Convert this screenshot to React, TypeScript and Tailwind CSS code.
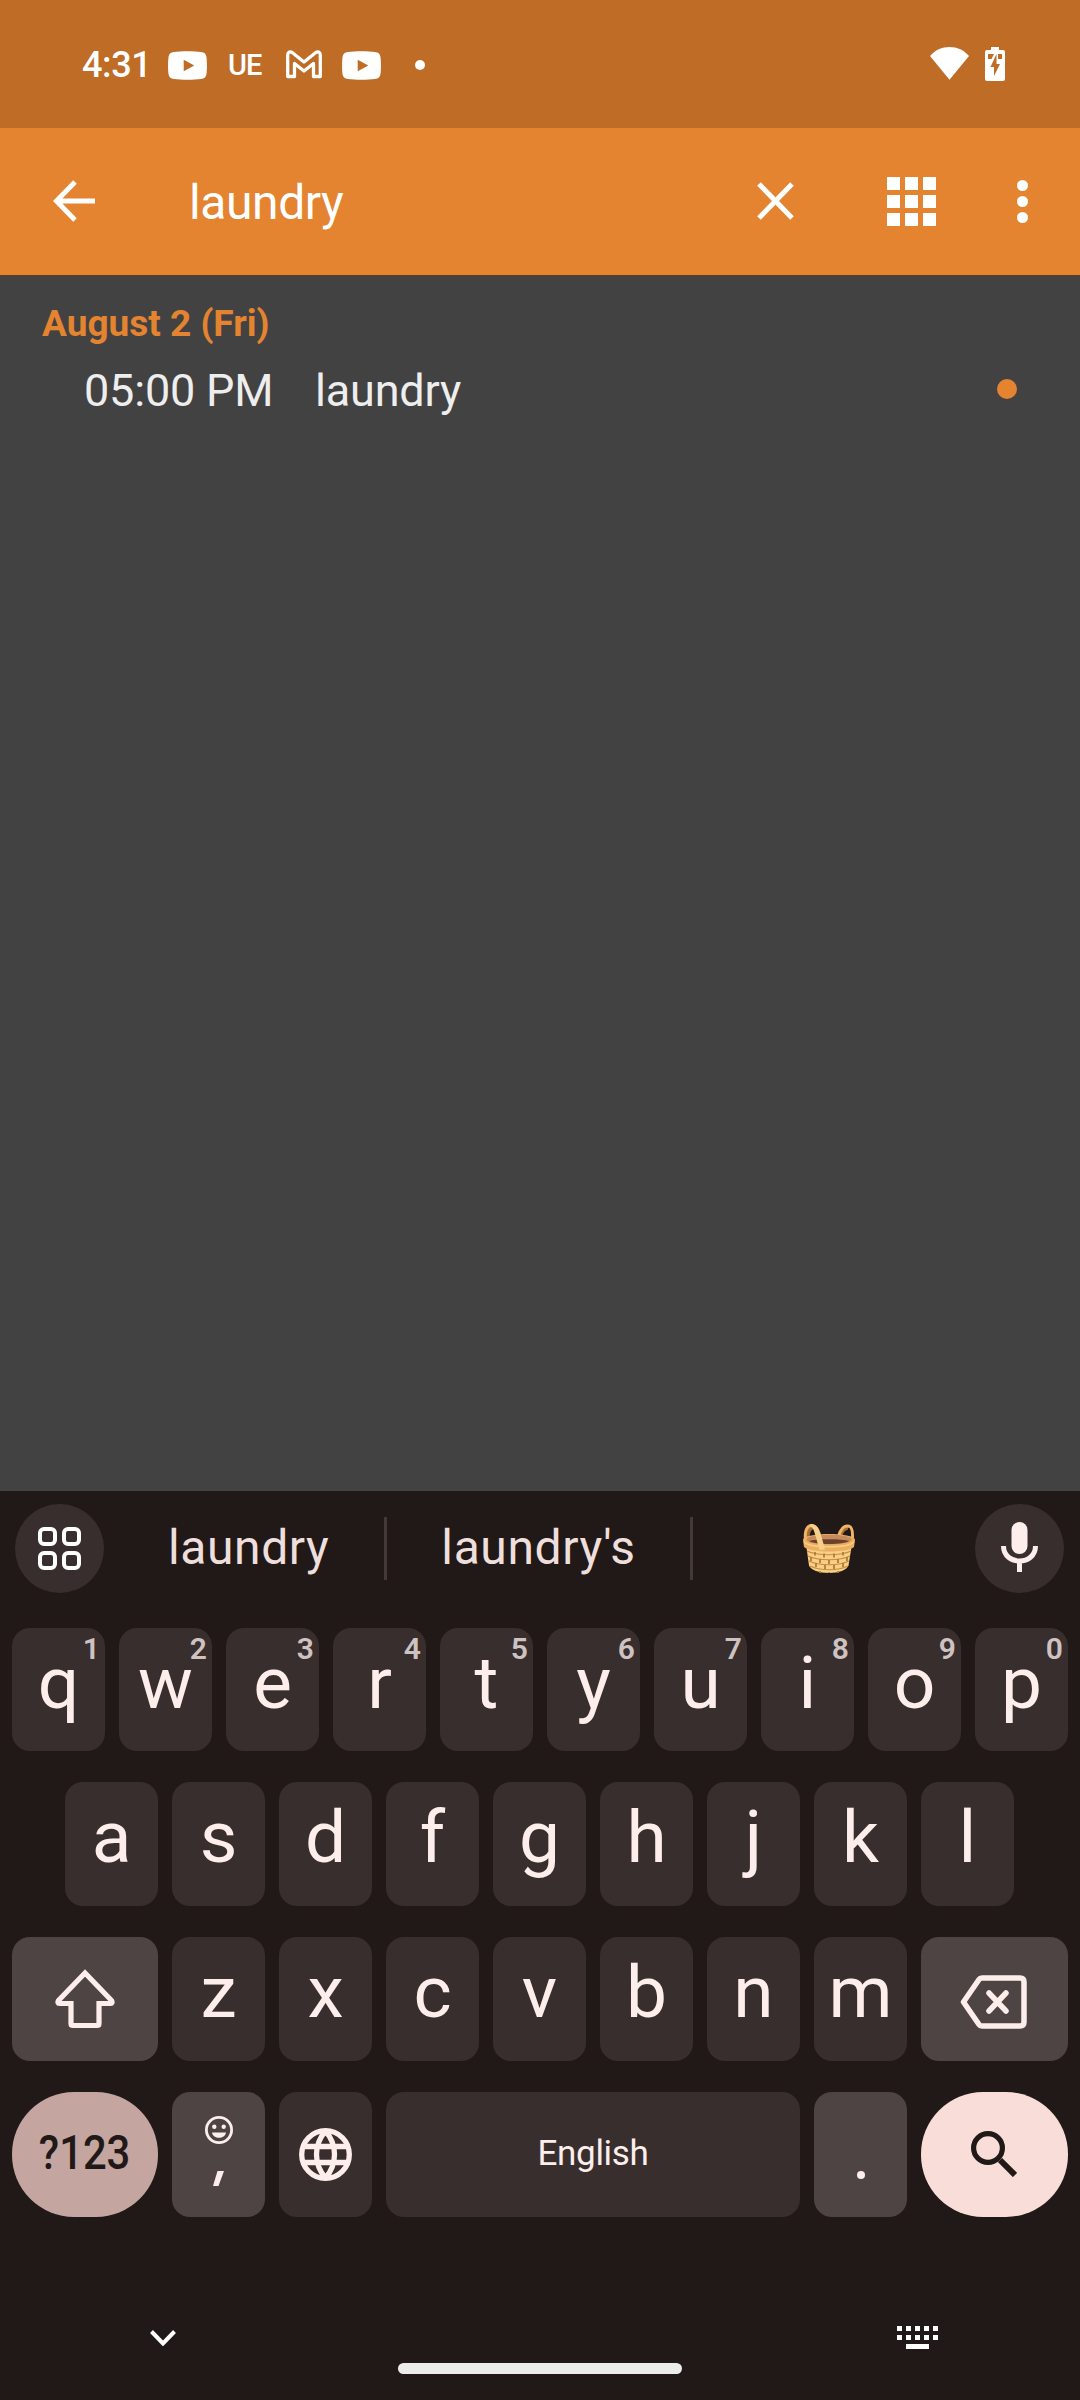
import type { ReactNode } from "react";

const TOP_ROW: [string, string][] = [
  ["q", "1"], ["w", "2"], ["e", "3"], ["r", "4"], ["t", "5"],
  ["y", "6"], ["u", "7"], ["i", "8"], ["o", "9"], ["p", "0"],
];

function YouTube() {
  return (
    <svg width="39" height="29" viewBox="0 0 39 29" fill="#fff">
      <path fillRule="evenodd" d="M6 .9C13 0 26 0 33 .9c3.500.4 5.100 1.800 5.500 5 .6 5 .6 12.200 0 17.200-.4 3.200-2 4.600-5.500 5-7 .9-20 .9-27 0-3.500-.4-5.100-1.800-5.500-5-.6-5-.6-12.200 0-17.200C.9 2.700 2.500 1.300 6 .9ZM15.700 8.800v11.400l10.600-5.700Z" />
    </svg>
  );
}

function StatusBar() {
  return (
    <header className="flex h-32 items-start bg-[#be6c26] pl-[82px] pr-[75px] text-white">
      <span className="mt-[44px] w-[86px] text-[36px] leading-[42px] font-medium tracking-[-0.400px]">4:31</span>
      <span className="mt-[51px] w-[60px]"><YouTube /></span>
      <span className="mt-[49px] w-[58px] text-[29px] leading-[33px] font-medium tracking-[-1px]">UE</span>
      <svg className="mt-[50px] mr-5" width="36" height="29" viewBox="0 0 36 29" fill="none" stroke="#fff" strokeWidth="3.300" strokeLinejoin="round">
        <path d="M1.700 26.500V5c0-3 2.500-4 4.800-2.200L18 12 29.500 2.800C31.800 1 34.300 2 34.300 5v21.500h-6.800V13.500L18 21l-9.500-7.500v13Z" />
      </svg>
      <span className="mt-[51px]"><YouTube /></span>
      <i className="mt-[60px] ml-[34px] size-[10px] rounded-full bg-white" />
      <svg className="mt-[47px] ml-auto" width="39" height="33" viewBox="0 0 39 33" fill="#fff">
        <path d="M0 8.900C5.200 3.200 12 0 19.500 0S33.800 3.200 39 8.900L19.500 32.700Z" />
      </svg>
      <svg className="mt-[47px] ml-4" width="20" height="34" viewBox="0 0 20 34" fill="#fff">
        <path fillRule="evenodd" d="M6 0h8v3h4q2 0 2 2v27q0 2-2 2H2q-2 0-2-2V5q0-2 2-2h4ZM3 7v5h3.500L9 7Zm10 0v5h4V7Zm-1.500 0L5.500 20H9v9l6-12h-3.500Z" />
      </svg>
    </header>
  );
}

function AppBar() {
  return (
    <div className="flex h-[147px] items-center bg-[#e48430] pb-px pl-[53px] pr-[52px] text-white">
      <svg width="42" height="42" viewBox="0 0 42 42" fill="none" stroke="#fff" strokeWidth="5">
        <path d="M42 21H4M22 2 3.500 21 22 40" />
      </svg>
      <span className="mt-[3px] ml-[94px] text-[48px] leading-[56px] tracking-[-0.400px]">laundry</span>
      <svg className="ml-auto" width="37" height="38" viewBox="0 0 37 38" stroke="#fff" strokeWidth="5">
        <path d="m2 2 33 34M35 2 2 36" />
      </svg>
      <div className="ml-[93px] grid grid-cols-3 gap-[5px]">
        {Array.from({ length: 9 }, (_, i) => <i key={i} className="size-[13px] bg-white" />)}
      </div>
      <div className="ml-[81px] flex flex-col gap-[5px]">
        {[0, 1, 2].map((i) => <i key={i} className="size-[11px] rounded-full bg-white" />)}
      </div>
    </div>
  );
}

function Results() {
  return (
    <main className="h-[1216px] border-t border-[#5a3c22] bg-[#424242] pt-[26px]">
      <h2 className="pl-[42px] text-[37px] leading-[44px] font-bold text-[#e48430]">August 2 (Fri)</h2>
      <div className="mt-[18px] flex items-center pl-[84px] pr-[63px] text-[45px] leading-[54px] tracking-[-0.200px] text-[#eee]">
        <span className="w-[231px]">05:00 PM</span>
        <span>laundry</span>
        <i className="mb-[5px] ml-auto size-5 rounded-full bg-[#e48430]" />
      </div>
    </main>
  );
}

function Basket() {
  return (
    <svg width="52" height="49" viewBox="0 0 52 49" fill="none">
      <path d="M4.500 16C4.500 8 6.500 3 11 3" stroke="#a96d38" strokeWidth="4" />
      <path d="M37 12C39 6 42 3.500 45 4" stroke="#a96d38" strokeWidth="4" />
      <path d="M35.500 12C38 4 42 1 46 2.200c4 1.500 4 7 3.300 13.800" stroke="#edb565" strokeWidth="3" />
      <path d="M3 20h46l-3.500 21.500C44 46 36 49 26 49S7.500 46 6 41.500Z" fill="#f7d083" />
      <path d="M4 27c10 5 34 5 44 0M5 32c10 5 32 5 42 0M6 37c10 5 30 5 40 0M7 42c10 5 28 5 38 0" stroke="#c68d49" strokeWidth="1.200" />
      <path d="M12 28v3.500m9-2v4m10-4v4m9-5.500v3.500M8 33v4m9-2v4m9-3v4m9-5v4m9-6v4M13 39v4m9-2v4m9-4v4m9-6v4m-23 4v3m9-2v3m9-4v3" stroke="#b57938" strokeWidth="1.800" />
      <path d="M0 16c0-8 52-8 52 0l-1 7c-6 6-44 6-50 0Z" fill="#ecae60" />
      <path d="M1 17.500c5 7 45 7 50 0" stroke="#f7cd86" strokeWidth="1.500" />
      <ellipse cx="26" cy="15.500" rx="22.500" ry="4.800" fill="#c68a5c" />
      <path d="M6 17c6-2.500 34-2.500 40 0-5 4-35 4-40 0Z" fill="#6b412b" />
      <path d="M2.500 16C1.500 7 4 1.500 8.500 1.500 11.500 1.500 13 5 14.500 9.500L18.500 25" stroke="#edb565" strokeWidth="3" />
      <path d="M7 0c6-.5 8.500 3 10.500 9L22 25.500l-5.500.500L12 10C10.500 5 9.500 3 7 2.500Z" fill="#f7cf88" />
    </svg>
  );
}

function Suggestions() {
  return (
    <div className="flex h-[89px] items-center pl-[15px] pr-4 text-[48px] leading-[56px] tracking-[0.600px] text-[#eedfdc]">
      <div className="flex size-[89px] items-center justify-center rounded-full bg-[#382e2d]">
        <div className="grid grid-cols-2 gap-[5px]">
          {[0, 1, 2, 3].map((i) => <i key={i} className="size-[19px] rounded-[6px] border-4 border-white" />)}
        </div>
      </div>
      <span className="mb-[2px] w-[280px] pl-[64px]">laundry</span>
      <i className="h-[63px] w-[3px] bg-[#433938]" />
      <span className="mb-[2px] w-[303px] text-center">laundry's</span>
      <i className="h-[63px] w-[3px] bg-[#433938]" />
      <span className="flex w-[282px] justify-center pr-[10px]"><Basket /></span>
      <div className="flex size-[89px] items-center justify-center rounded-full bg-[#382e2d]">
        <svg className="mb-[3px]" width="37" height="50" viewBox="0 0 37 50" fill="none" stroke="#fdeeeb" strokeWidth="5">
          <rect x="10.500" y="0" width="16" height="32" rx="8" fill="#fdeeeb" stroke="none" />
          <path d="M2.500 24c0 20 32 20 32 0M18.500 38v12" />
        </svg>
      </div>
    </div>
  );
}

function Key({ letter, hint }: { letter: string; hint?: string }) {
  return (
    <div className="relative h-full w-[93px] rounded-[18px] bg-[#382e2d] text-center text-[73px] leading-[110px] text-[#fdeeeb]">
      {letter}
      {hint && <span className="absolute top-0 right-[5px] text-[30px] leading-[42px] font-semibold text-[#cfc3c1]">{hint}</span>}
    </div>
  );
}

function Row({ children, className }: { children: ReactNode; className: string }) {
  return <div className={`flex justify-center gap-[14px] ${className}`}>{children}</div>;
}

function Keyboard() {
  return (
    <section className="h-[909px] bg-[#211917] pt-[13px]">
      <Suggestions />
      <Row className="mt-[35px] h-[123px]">
        {TOP_ROW.map(([l, h]) => <Key key={l} letter={l} hint={h} />)}
      </Row>
      <Row className="mt-[31px] h-[124px] pr-px">
        {"asdfghjkl".split("").map((l) => <Key key={l} letter={l} />)}
      </Row>
      <Row className="mt-[31px] h-[124px]">
        <div className="flex w-[146px] items-center justify-center rounded-[18px] bg-[#4e4443]">
          <svg width="60" height="60" viewBox="0 0 60 60" fill="none" stroke="#fdeeeb" strokeWidth="5.200">
            <path d="M30 4 3.500 31.500q-1.500 3 1 3H16v20q0 2 2 2h24q2 0 2-2v-20h11.500q2.500 0 1-3Z" />
          </svg>
        </div>
        {"zxcvbnm".split("").map((l) => <Key key={l} letter={l} />)}
        <div className="flex w-[147px] items-center justify-center rounded-[18px] bg-[#4e4443] pr-[2px]">
          <svg className="mt-[5px]" width="67" height="54" viewBox="0 0 67 54" fill="none" stroke="#fdeeeb" strokeWidth="5.500" strokeLinejoin="round" strokeLinecap="round">
            <path d="M22 3h38q4 0 4 4v40q0 4-4 4H22q-2 0-3-1.500L3.500 27 19 4.500Q20 3 22 3ZM29 18l17 18M46 18 29 36" />
          </svg>
        </div>
      </Row>
      <Row className="mt-[31px] h-[125px] text-[#fdeeeb]">
        <div className="flex w-[146px] justify-center rounded-[62px] bg-[#c4a59f] text-[48px] leading-[122px] font-medium text-[#211917]">
          <span className="scale-x-[0.870]">?123</span>
        </div>
        <div className="flex w-[93px] flex-col items-center rounded-[18px] bg-[#4e4443] pt-6">
          <svg width="28" height="28" viewBox="0 0 28 28" fill="#fdeeeb">
            <circle cx="14" cy="14" r="12.600" fill="none" stroke="#fdeeeb" strokeWidth="2.800" />
            <circle cx="9.300" cy="10.800" r="2.200" />
            <circle cx="18.700" cy="10.800" r="2.200" />
            <path d="M7 16.500h14c-1 7-13 7-14 0Z" />
          </svg>
          <svg className="mt-[27px]" width="11" height="15" viewBox="0 0 11 15" fill="#fdeeeb">
            <path d="M4.500 0H11L5.500 15H0Z" />
          </svg>
        </div>
        <div className="flex w-[93px] items-center justify-center rounded-[18px] bg-[#382e2d]">
          <svg width="53" height="53" viewBox="0 0 53 53" fill="none" stroke="#fdeeeb" strokeWidth="5.300">
            <circle cx="26.500" cy="26.500" r="23.800" />
            <path d="M5 18.500h43M5 34.500h43M26.500 3c-12 14-12 33 0 47M26.500 3c12 14 12 33 0 47" />
          </svg>
        </div>
        <div className="w-[414px] rounded-[18px] bg-[#382e2d] text-center text-[35px] leading-[124px] tracking-[-0.300px]">English</div>
        <div className="flex w-[93px] justify-center rounded-[18px] bg-[#4e4443] pt-[79px]">
          <i className="size-2 rounded-full bg-[#fdeeeb]" />
        </div>
        <div className="flex w-[147px] items-center justify-center rounded-[62px] bg-[#f8ddd8] pr-[2px]">
          <svg className="mb-[2px]" width="46" height="46" viewBox="0 0 46 46" fill="none" stroke="#211917" strokeWidth="5.200">
            <circle cx="17" cy="17" r="14.400" />
            <path d="m29 29 15 15" strokeWidth="6" />
          </svg>
        </div>
      </Row>
      <nav className="mt-[109px] flex items-start justify-between pl-[150px] pr-[142px]">
        <svg className="mt-1" width="26" height="16" viewBox="0 0 26 16" fill="none" stroke="#fff" strokeWidth="4">
          <path d="m1.500 1.500 11.500 12 11.500-12" />
        </svg>
        <svg width="41" height="23" viewBox="0 0 41 23" fill="#fff">
          {[0, 9, 18, 27, 36].map((x) => <path key={x} d={`M${x} 0h5v5h-5zM${x} 9h5v5h-5z`} />)}
          <path d="M9 18h23v5H9z" />
        </svg>
      </nav>
      <i className="mx-auto mt-[14px] block h-[11px] w-[284px] rounded-full bg-[#ececec]" />
    </section>
  );
}

export default function App() {
  return (
    <div className="h-[2400px] w-[1080px] overflow-hidden font-[Roboto,sans-serif]">
      <StatusBar />
      <AppBar />
      <Results />
      <Keyboard />
    </div>
  );
}
